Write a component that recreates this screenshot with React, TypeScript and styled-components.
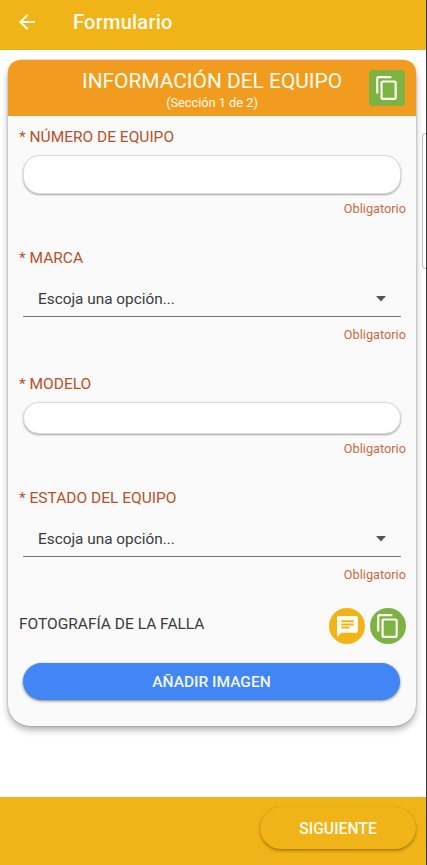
import React from "react";
import styled, { createGlobalStyle } from "styled-components";

const GlobalStyle = createGlobalStyle`
  * { box-sizing: border-box; }
  body { margin: 0; background: #fff; font-family: Roboto, "Liberation Sans", sans-serif; }
  button { font-family: inherit; border: 0; padding: 0; cursor: pointer; }
`;

const Screen = styled.div`
  position: relative;
  display: flex;
  flex-direction: column;
  width: 427px;
  height: 865px;
  overflow: hidden;
  background: #fff;
  border-right: 1px solid #333;
`;

const AppBar = styled.header`
  display: flex;
  align-items: center;
  gap: 36px;
  height: 50px;
  padding: 0 0 7px 17px;
  background: #f0b419;
  color: #fffdf0;
`;

const BackButton = styled.button`
  display: flex;
  width: 20px;
  height: 20px;
  background: none;
  color: inherit;
`;

const AppTitle = styled.h1`
  margin: 0;
  font-size: 20px;
  font-weight: 500;
  line-height: 24px;
  letter-spacing: 0.25px;
`;

const Content = styled.main`
  flex: 1;
  padding: 10px 10px 0 8px;
`;

const Card = styled.section`
  height: 666px;
  border-radius: 16px 16px 22px 22px;
  background: #fafafa;
  box-shadow: 0 4px 7px rgba(0, 0, 0, 0.3), 0 0 2px rgba(0, 0, 0, 0.35);
`;

const CardHeader = styled.div`
  display: grid;
  grid-template-columns: 1fr auto;
  align-items: center;
  height: 56px;
  padding: 0 11px 0 47px;
  border-radius: 12px 12px 0 0;
  background: #f29c1f;
  color: #fffdf0;
`;

const Heading = styled.div`
  text-align: center;
  padding-top: 6px;
`;

const CardTitle = styled.h2`
  margin: 0;
  font-size: 20.9px;
  font-weight: 400;
  line-height: 24px;
  white-space: nowrap;
`;

const CardSubtitle = styled.div`
  font-size: 12.75px;
  line-height: 20px;
`;

const IconButton = styled.button<{ $color: string; $round?: boolean }>`
  display: flex;
  align-items: center;
  justify-content: center;
  width: 36px;
  height: 36px;
  border-radius: ${(p) => (p.$round ? "50%" : "4px")};
  background: ${(p) => p.$color};
  color: #fffef5;
`;

const Field = styled.div<{ $height: number }>`
  display: flex;
  flex-direction: column;
  height: ${(p) => p.$height}px;
  padding: 11px 10px 0 11px;
`;

const Label = styled.label`
  font-size: 15.5px;
  line-height: 21px;
  height: 20px;
  color: #b9502b;
`;

const TextInput = styled.input<{ $height: number }>`
  height: ${(p) => p.$height}px;
  margin: 8px 5px 0 4px;
  padding: 0 16px;
  border: 1px solid #dcdcdc;
  border-radius: 17px;
  outline: none;
  background: #fff;
  font: 16px Roboto, sans-serif;
  box-shadow: 0 1px 2px rgba(0, 0, 0, 0.35);
`;

const Select = styled.div`
  display: flex;
  align-items: center;
  justify-content: space-between;
  height: 39px;
  margin: 10px 5px 0 4px;
  padding: 4px 15px 0 15px;
  border-bottom: 1px solid #747474;
  font-size: 15.35px;
  color: #3b3b3b;
`;

const Required = styled.span<{ $gap: number }>`
  align-self: flex-end;
  margin-top: ${(p) => p.$gap}px;
  font-size: 12.75px;
  line-height: 16px;
  color: #c96a45;
`;

const PhotoRow = styled.div`
  display: flex;
  align-items: center;
  gap: 5px;
  height: 36px;
  padding: 0 10px 0 11px;
`;

const PhotoLabel = styled.span`
  flex: 1;
  padding-bottom: 4px;
  font-size: 15.5px;
  color: #3b3b3b;
`;

const AddImage = styled.button`
  display: block;
  width: 377px;
  height: 37px;
  margin: 19px 0 0 15px;
  border-radius: 19px;
  background: #4285f4;
  color: #f4f8ff;
  font-size: 15.5px;
  font-weight: 500;
  box-shadow: 0 1px 3px rgba(0, 0, 0, 0.5);
`;

const Footer = styled.footer`
  display: flex;
  justify-content: flex-end;
  height: 68px;
  padding: 10px 10px 0 0;
  background: #f0b419;
`;

const NextButton = styled.button`
  width: 156px;
  height: 42px;
  border-radius: 21px;
  background: #f0b419;
  color: #fffdf0;
  font-size: 15.7px;
  font-weight: 500;
  box-shadow: 0 2px 3px rgba(90, 60, 0, 0.42), 0 0 1px rgba(90, 60, 0, 0.35);
`;

const EdgeHandle = styled.div`
  position: absolute;
  top: 133px;
  right: 0;
  width: 4px;
  height: 136px;
  border: 1px solid #bdbdbd;
  border-right: 0;
  border-radius: 4px 0 0 4px;
  background: #fff;
`;

const CopyIcon = () => (
  <svg width="26" height="26" viewBox="0 0 24 24" fill="currentColor">
    <path d="M16 1H4C2.900 1 2 1.900 2 3v14h2V3h12V1zm3 4H8C6.900 5 6 5.900 6 7v14c0 1.100.9 2 2 2h11c1.100 0 2-.9 2-2V7c0-1.100-.9-2-2-2zm0 16H8V7h11v14z" />
  </svg>
);

const MessageIcon = () => (
  <svg width="25" height="25" viewBox="0 0 24 24" fill="currentColor">
    <path d="M20 2H4c-1.100 0-1.990.9-1.990 2L2 22l4-4h14c1.100 0 2-.9 2-2V4c0-1.100-.9-2-2-2zM6 9h12v2H6V9zm8 5H6v-2h8v2zm4-6H6V6h12v2z" />
  </svg>
);

const BackIcon = () => (
  <svg width="20" height="20" viewBox="2 2 20 20" fill="currentColor">
    <path d="M20 11H7.830l5.590-5.590L12 4l-8 8 8 8 1.410-1.410L7.830 13H20v-2z" />
  </svg>
);

const CaretIcon = () => (
  <svg width="10" height="6" viewBox="0 0 10 6" fill="#555">
    <path d="M0 0h10L5 5.500z" />
  </svg>
);

const fields = [
  { label: "NÚMERO DE EQUIPO", height: 121, input: 39, gap: 7 },
  { label: "MARCA", height: 126, gap: 10 },
  { label: "MODELO", height: 114, input: 32, gap: 7 },
  { label: "ESTADO DEL EQUIPO", height: 131, gap: 10 },
];

export default function App() {
  return (
    <>
      <GlobalStyle />
      <Screen>
        <AppBar>
          <BackButton aria-label="Atrás"><BackIcon /></BackButton>
          <AppTitle>Formulario</AppTitle>
        </AppBar>
        <Content>
          <Card>
            <CardHeader>
              <Heading>
                <CardTitle>INFORMACIÓN DEL EQUIPO</CardTitle>
                <CardSubtitle>(Sección 1 de 2)</CardSubtitle>
              </Heading>
              <IconButton $color="#7cb342" aria-label="Copiar"><CopyIcon /></IconButton>
            </CardHeader>
            {fields.map((f) => (
              <Field key={f.label} $height={f.height}>
                <Label>* {f.label}</Label>
                {f.input ? (
                  <TextInput $height={f.input} aria-label={f.label} />
                ) : (
                  <Select>Escoja una opción...<CaretIcon /></Select>
                )}
                <Required $gap={f.gap}>Obligatorio</Required>
              </Field>
            ))}
            <PhotoRow>
              <PhotoLabel>FOTOGRAFÍA DE LA FALLA</PhotoLabel>
              <IconButton $round $color="#f0b419" aria-label="Comentar"><MessageIcon /></IconButton>
              <IconButton $round $color="#7cb342" aria-label="Copiar"><CopyIcon /></IconButton>
            </PhotoRow>
            <AddImage>AÑADIR IMAGEN</AddImage>
          </Card>
        </Content>
        <Footer>
          <NextButton>SIGUIENTE</NextButton>
        </Footer>
        <EdgeHandle />
      </Screen>
    </>
  );
}
